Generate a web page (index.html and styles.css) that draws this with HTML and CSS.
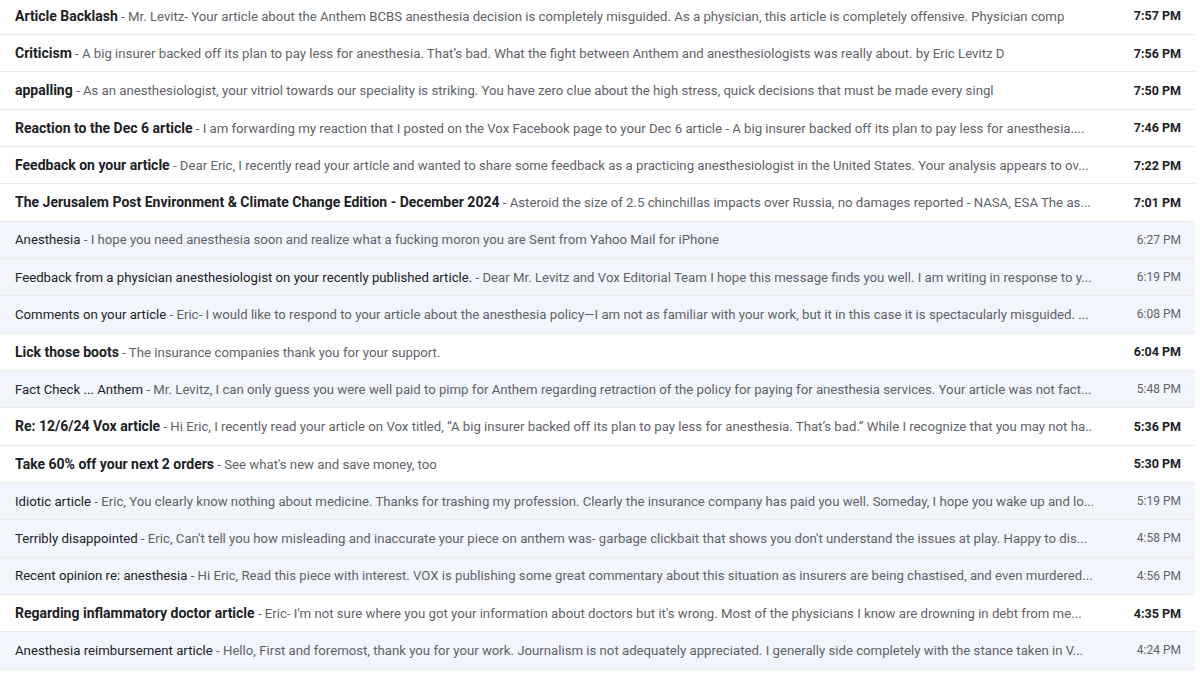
FILE: index.html
```html
<!DOCTYPE html>
<html>
<head>
<meta charset="utf-8">
<link rel="stylesheet" href="styles.css">
</head>
<body>
<div class="list">
  <div class="row unread"><div class="text"><span class="subj">Article Backlash</span><span class="snip"> - Mr. Levitz- Your article about the Anthem BCBS anesthesia decision is completely misguided. As a physician, this article is completely offensive. Physician comp</span></div><div class="time">7:57 PM</div></div>
  <div class="row unread"><div class="text"><span class="subj">Criticism</span><span class="snip"> - A big insurer backed off its plan to pay less for anesthesia. That’s bad. What the fight between Anthem and anesthesiologists was really about. by Eric Levitz D</span></div><div class="time">7:56 PM</div></div>
  <div class="row unread"><div class="text"><span class="subj">appalling</span><span class="snip"> - As an anesthesiologist, your vitriol towards our speciality is striking. You have zero clue about the high stress, quick decisions that must be made every singl</span></div><div class="time">7:50 PM</div></div>
  <div class="row unread"><div class="text"><span class="subj">Reaction to the Dec 6 article</span><span class="snip"> - I am forwarding my reaction that I posted on the Vox Facebook page to your Dec 6 article - A big insurer backed off its plan to pay less for anesthesia....</span></div><div class="time">7:46 PM</div></div>
  <div class="row unread"><div class="text"><span class="subj">Feedback on your article</span><span class="snip"> - Dear Eric, I recently read your article and wanted to share some feedback as a practicing anesthesiologist in the United States. Your analysis appears to ov...</span></div><div class="time">7:22 PM</div></div>
  <div class="row unread"><div class="text"><span class="subj">The Jerusalem Post Environment &amp; Climate Change Edition - December 2024</span><span class="snip"> - Asteroid the size of 2.5 chinchillas impacts over Russia, no damages reported - NASA, ESA The as...</span></div><div class="time">7:01 PM</div></div>
  <div class="row read"><div class="text"><span class="subj">Anesthesia</span><span class="snip"> - I hope you need anesthesia soon and realize what a fucking moron you are Sent from Yahoo Mail for iPhone</span></div><div class="time">6:27 PM</div></div>
  <div class="row read"><div class="text"><span class="subj">Feedback from a physician anesthesiologist on your recently published article.</span><span class="snip"> - Dear Mr. Levitz and Vox Editorial Team I hope this message finds you well. I am writing in response to y...</span></div><div class="time">6:19 PM</div></div>
  <div class="row read"><div class="text"><span class="subj">Comments on your article</span><span class="snip"> - Eric- I would like to respond to your article about the anesthesia policy—I am not as familiar with your work, but it in this case it is spectacularly misguided. ...</span></div><div class="time">6:08 PM</div></div>
  <div class="row unread"><div class="text"><span class="subj">Lick those boots</span><span class="snip"> - The insurance companies thank you for your support.</span></div><div class="time">6:04 PM</div></div>
  <div class="row read"><div class="text"><span class="subj">Fact Check ... Anthem</span><span class="snip"> - Mr. Levitz, I can only guess you were well paid to pimp for Anthem regarding retraction of the policy for paying for anesthesia services. Your article was not fact...</span></div><div class="time">5:48 PM</div></div>
  <div class="row unread"><div class="text"><span class="subj">Re: 12/6/24 Vox article</span><span class="snip"> - Hi Eric, I recently read your article on Vox titled, “A big insurer backed off its plan to pay less for anesthesia. That’s bad.” While I recognize that you may not ha...</span></div><div class="time">5:36 PM</div></div>
  <div class="row unread"><div class="text"><span class="subj">Take 60% off your next 2 orders</span><span class="snip"> - See what's new and save money, too</span></div><div class="time">5:30 PM</div></div>
  <div class="row read"><div class="text"><span class="subj">Idiotic article</span><span class="snip"> - Eric, You clearly know nothing about medicine. Thanks for trashing my profession. Clearly the insurance company has paid you well. Someday, I hope you wake up and lo...</span></div><div class="time">5:19 PM</div></div>
  <div class="row read"><div class="text"><span class="subj">Terribly disappointed</span><span class="snip"> - Eric, Can't tell you how misleading and inaccurate your piece on anthem was- garbage clickbait that shows you don't understand the issues at play. Happy to dis...</span></div><div class="time">4:58 PM</div></div>
  <div class="row read"><div class="text"><span class="subj">Recent opinion re: anesthesia</span><span class="snip"> - Hi Eric, Read this piece with interest. VOX is publishing some great commentary about this situation as insurers are being chastised, and even murdered...</span></div><div class="time">4:56 PM</div></div>
  <div class="row unread"><div class="text"><span class="subj">Regarding inflammatory doctor article</span><span class="snip"> - Eric- I'm not sure where you got your information about doctors but it's wrong. Most of the physicians I know are drowning in debt from me...</span></div><div class="time">4:35 PM</div></div>
  <div class="row read"><div class="text"><span class="subj">Anesthesia reimbursement article</span><span class="snip"> - Hello, First and foremost, thank you for your work. Journalism is not adequately appreciated. I generally side completely with the stance taken in V...</span></div><div class="time">4:24 PM</div></div>
</div>
</body>
</html>
```

FILE: styles.css
```css
html, body {
  margin: 0;
  padding: 0;
  background: #ffffff;
}
body {
  font-family: Roboto, "Liberation Sans", sans-serif;
  color: #202124;
  overflow: hidden;
}
.list {
  width: 1195px;
  margin-top: -2.4px;
}
.row {
  display: flex;
  align-items: center;
  height: 37.33px;
  box-sizing: border-box;
  border-bottom: 1px solid #e8eaed;
  padding: 0 14px 0 15px;
}
.row.read {
  background: #f2f6fc;
}
.text {
  flex: 1;
  min-width: 0;
  white-space: nowrap;
  overflow: hidden;
  font-size: 13.2px;
}
.subj {
  color: #202124;
}
.unread .subj {
  font-weight: 700;
  font-size: 14px;
}
.snip {
  color: #5f6368;
}
.time {
  width: 80px;
  text-align: right;
  font-size: 12px;
  color: #5f6368;
  flex: none;
  padding-left: 8px;
}
.unread .time {
  font-weight: 700;
  font-size: 12.5px;
  color: #202124;
}
```
